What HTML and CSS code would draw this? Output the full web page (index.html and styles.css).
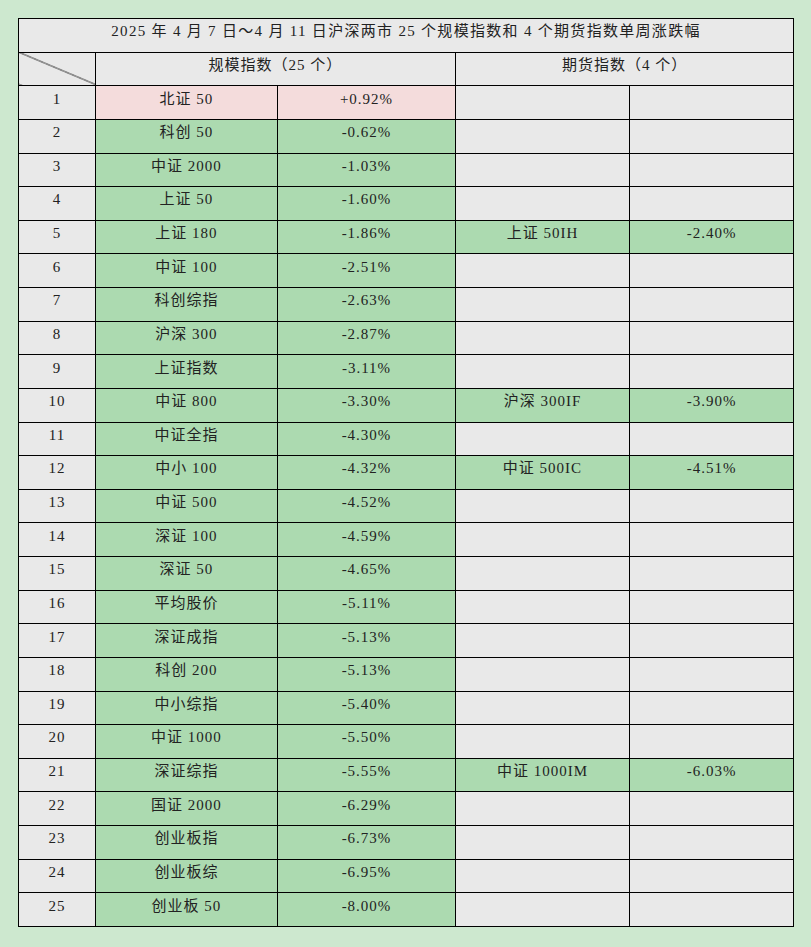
FILE: index.html
```html
<!DOCTYPE html>
<html lang="zh-CN">
<head>
<meta charset="utf-8">
<title>规模指数和期货指数单周涨跌幅</title>
<link rel="stylesheet" href="styles.css">
</head>
<body>
<table class="sheet">
  <colgroup>
    <col class="c-idx"><col class="c-name"><col class="c-val"><col class="c-fname"><col class="c-fval">
  </colgroup>
  <tr class="row-title"><td colspan="5" class="title">2025 年 4 月 7 日～4 月 11 日沪深两市 25 个规模指数和 4 个期货指数单周涨跌幅</td></tr>
  <tr class="row-head"><td class="diag"></td><td colspan="2">规模指数（25 个）</td><td colspan="2">期货指数（4 个）</td></tr>
  <tr><td>1</td><td class="up">北证 50</td><td class="up">+0.92%</td><td></td><td></td></tr>
  <tr><td>2</td><td class="dn">科创 50</td><td class="dn">-0.62%</td><td></td><td></td></tr>
  <tr><td>3</td><td class="dn">中证 2000</td><td class="dn">-1.03%</td><td></td><td></td></tr>
  <tr><td>4</td><td class="dn">上证 50</td><td class="dn">-1.60%</td><td></td><td></td></tr>
  <tr><td>5</td><td class="dn">上证 180</td><td class="dn">-1.86%</td><td class="dn">上证 50IH</td><td class="dn">-2.40%</td></tr>
  <tr><td>6</td><td class="dn">中证 100</td><td class="dn">-2.51%</td><td></td><td></td></tr>
  <tr><td>7</td><td class="dn">科创综指</td><td class="dn">-2.63%</td><td></td><td></td></tr>
  <tr><td>8</td><td class="dn">沪深 300</td><td class="dn">-2.87%</td><td></td><td></td></tr>
  <tr><td>9</td><td class="dn">上证指数</td><td class="dn">-3.11%</td><td></td><td></td></tr>
  <tr><td>10</td><td class="dn">中证 800</td><td class="dn">-3.30%</td><td class="dn">沪深 300IF</td><td class="dn">-3.90%</td></tr>
  <tr><td>11</td><td class="dn">中证全指</td><td class="dn">-4.30%</td><td></td><td></td></tr>
  <tr><td>12</td><td class="dn">中小 100</td><td class="dn">-4.32%</td><td class="dn">中证 500IC</td><td class="dn">-4.51%</td></tr>
  <tr><td>13</td><td class="dn">中证 500</td><td class="dn">-4.52%</td><td></td><td></td></tr>
  <tr><td>14</td><td class="dn">深证 100</td><td class="dn">-4.59%</td><td></td><td></td></tr>
  <tr><td>15</td><td class="dn">深证 50</td><td class="dn">-4.65%</td><td></td><td></td></tr>
  <tr><td>16</td><td class="dn">平均股价</td><td class="dn">-5.11%</td><td></td><td></td></tr>
  <tr><td>17</td><td class="dn">深证成指</td><td class="dn">-5.13%</td><td></td><td></td></tr>
  <tr><td>18</td><td class="dn">科创 200</td><td class="dn">-5.13%</td><td></td><td></td></tr>
  <tr><td>19</td><td class="dn">中小综指</td><td class="dn">-5.40%</td><td></td><td></td></tr>
  <tr><td>20</td><td class="dn">中证 1000</td><td class="dn">-5.50%</td><td></td><td></td></tr>
  <tr><td>21</td><td class="dn">深证综指</td><td class="dn">-5.55%</td><td class="dn">中证 1000IM</td><td class="dn">-6.03%</td></tr>
  <tr><td>22</td><td class="dn">国证 2000</td><td class="dn">-6.29%</td><td></td><td></td></tr>
  <tr><td>23</td><td class="dn">创业板指</td><td class="dn">-6.73%</td><td></td><td></td></tr>
  <tr><td>24</td><td class="dn">创业板综</td><td class="dn">-6.95%</td><td></td><td></td></tr>
  <tr><td>25</td><td class="dn">创业板 50</td><td class="dn">-8.00%</td><td></td><td></td></tr>
</table>
</body>
</html>
```
FILE: styles.css
```css
html, body {
  margin: 0;
  padding: 0;
}
body {
  background: #cde8cf;
  width: 811px;
  height: 947px;
  padding: 18px 0 0 18px;
  box-sizing: border-box;
  font-family: "Liberation Serif", "Noto Sans CJK SC", serif;
  font-size: 15px;
  color: #222;
}
.sheet {
  border-collapse: collapse;
  table-layout: fixed;
  width: 775px;
}
.c-idx { width: 77px; }
.c-name { width: 182px; }
.c-val { width: 178px; }
.c-fname { width: 174px; }
.c-fval { width: 164px; }
.sheet td {
  border: 1px solid #000;
  background: #e9e9e9;
  height: 33.63px;
  padding: 0 0 8px 0;
  box-sizing: border-box;
  text-align: center;
  vertical-align: middle;
  letter-spacing: 1px;
  white-space: nowrap;
  line-height: 18px;
}
.sheet td.title {
  letter-spacing: 1.3px;
}
.sheet td.up {
  background: #f4dcdc;
}
.sheet td.dn {
  background: #acdab0;
}
.sheet td.diag {
  background: #e9e9e9 linear-gradient(to top right, transparent calc(50% - 0.7px), #000 50%, transparent calc(50% + 0.7px));
}
```
